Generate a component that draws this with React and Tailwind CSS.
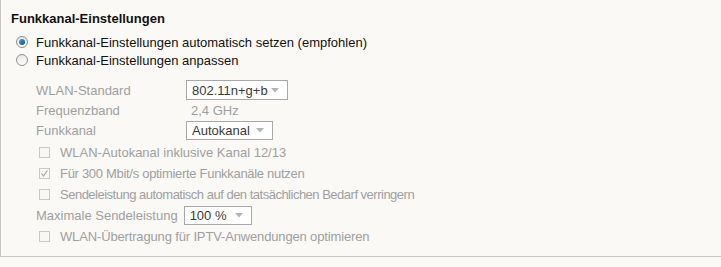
import React from 'react';

function Radio({ checked }) {
  return (
    <span className="flex h-[12px] w-[12px] items-center justify-center rounded-full border border-[#8f8f8f] bg-gradient-to-b from-[#e8e8e8] to-[#fcfcfc]">
      {checked && (
        <span className="h-[6px] w-[6px] rounded-full bg-gradient-to-br from-[#4ea3e8] to-[#0b4c8c]" />
      )}
    </span>
  );
}

function Checkbox({ checked }) {
  return (
    <span className="flex h-[11px] w-[11px] items-center justify-center border border-[#c9c9c9] bg-[#f7f7f4]">
      {checked && (
        <svg width="9" height="9" viewBox="0 0 9 9">
          <path d="M1.5 4.5 L3.5 7 L7.5 1.5" fill="none" stroke="#a9a9a9" strokeWidth="1.2" />
        </svg>
      )}
    </span>
  );
}

function Select({ value, width, height }) {
  return (
    <div
      className={`flex items-center justify-between border border-[#a8a8a8] bg-white pl-[5px] pr-[8px] text-[#3a3a3a] ${width} ${height}`}
    >
      <span>{value}</span>
      <svg width="8" height="5" viewBox="0 0 8 5">
        <path d="M0 0 L8 0 L4 4.5 Z" fill="#b4b4b4" />
      </svg>
    </div>
  );
}

function CheckRow({ label, checked, tracking = '' }) {
  return (
    <div className="flex h-[21px] items-center pl-[38px]">
      <Checkbox checked={checked} />
      <span className={`ml-[10px] ${tracking}`}>{label}</span>
    </div>
  );
}

export default function App() {
  return (
    <div className="h-[267px] w-[721px] bg-[#faf9f6] font-['Liberation_Sans',Arial,sans-serif] text-[13px] leading-none">
      <div className="h-[257px] border-b border-l border-[#c9c7c1] pt-[9px]">
        <div className="flex h-[18px] items-center pl-[10px] font-bold text-[#111]">Funkkanal-Einstellungen</div>

        <div className="mt-[6px] text-[#111]">
          <div className="flex h-[18px] items-center pl-[15px]">
            <Radio checked />
            <span className="ml-[8px]">Funkkanal-Einstellungen automatisch setzen (empfohlen)</span>
          </div>
          <div className="flex h-[18px] items-center pl-[15px]">
            <Radio />
            <span className="ml-[8px]">Funkkanal-Einstellungen anpassen</span>
          </div>
        </div>

        <div className="mt-[11px] text-[#a0a0a0]">
          <div className="flex h-[20px] items-center pl-[35px]">
            <span className="w-[150px]">WLAN-Standard</span>
            <Select value="802.11n+g+b" width="w-[102px]" height="h-[20px]" />
          </div>
          <div className="flex h-[20px] items-center pl-[35px]">
            <span className="w-[155px]">Frequenzband</span>
            <span>2,4 GHz</span>
          </div>
          <div className="flex h-[20px] items-center pl-[35px]">
            <span className="w-[150px]">Funkkanal</span>
            <Select value="Autokanal" width="w-[87px]" height="h-[19px]" />
          </div>

          <div className="mt-[2px]">
            <CheckRow label="WLAN-Autokanal inklusive Kanal 12/13" />
            <CheckRow label="Für 300 Mbit/s optimierte Funkkanäle nutzen" checked tracking="tracking-[-0.3px]" />
            <CheckRow
              label="Sendeleistung automatisch auf den tatsächlichen Bedarf verringern"
              tracking="tracking-[-0.5px]"
            />
            <div className="flex h-[21px] items-center pl-[35px]">
              <span>Maximale Sendeleistung</span>
              <div className="ml-[6px]">
                <Select value="100 %" width="w-[68px]" height="h-[19px]" />
              </div>
            </div>
            <CheckRow label="WLAN-Übertragung für IPTV-Anwendungen optimieren" tracking="tracking-[-0.15px]" />
          </div>
        </div>
      </div>
    </div>
  );
}
